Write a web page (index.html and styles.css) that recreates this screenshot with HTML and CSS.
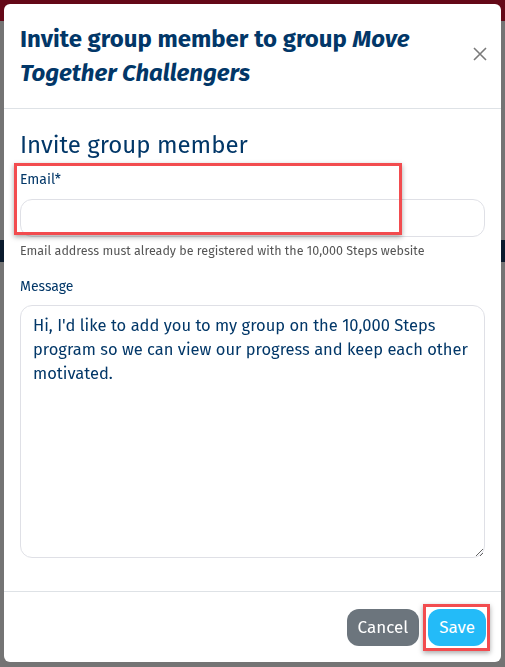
FILE: index.html
```html
<!DOCTYPE html>
<html lang="en">
<head>
    <meta charset="UTF-8">
    <meta name="viewport" content="width=device-width, initial-scale=1.0">
    <title>Invite group member</title>
    <link rel="stylesheet" href="styles.css">
</head>
<body>

    <!-- Page behind the dialog -->
    <div class="page">
        <div class="page-top"></div>
        <div class="page-band"></div>
    </div>
    <div class="backdrop"></div>

    <div class="modal">
        <div class="modal-header">
            <h1 class="modal-title">Invite group member to group <em>Move Together Challengers</em></h1>
            <button class="close" aria-label="Close">
                <svg width="14" height="14" viewBox="0 0 14 14"><path d="M1 1L13 13M13 1L1 13" stroke="#7a7a7a" stroke-width="1.6" fill="none"/></svg>
            </button>
        </div>

        <div class="modal-body">
            <h2 class="section-title">Invite group member</h2>

            <div class="field field-email">
                <label for="email">Email*</label>
                <input type="text" id="email">
                <div class="mark mark-email"></div>
            </div>
            <div class="help">Email address must already be registered with the 10,000 Steps website</div>

            <div class="field">
                <label for="message">Message</label>
                <textarea id="message">Hi, I'd like to add you to my group on the 10,000 Steps program so we can view our progress and keep each other motivated.</textarea>
            </div>
        </div>

        <div class="modal-footer">
            <button class="btn btn-cancel">Cancel</button>
            <div class="save-wrap">
                <button class="btn btn-save">Save</button>
                <div class="mark mark-save"></div>
            </div>
        </div>
    </div>

</body>
</html>
```

FILE: styles.css
```css
body {
    margin: 0;
    font-family: "Fira Sans", "Open Sans", sans-serif;
    background-color: #e9e9e9;
    height: 667px;
    overflow: hidden;
}
.page-top {
    height: 21px;
    background-color: #c8102e;
}
.page-band {
    margin-top: 219px;
    height: 22px;
    background-color: #14355a;
}
.backdrop {
    position: fixed;
    inset: 0;
    background-color: rgba(0, 0, 0, 0.5);
}
.modal {
    position: fixed;
    top: 4px;
    left: 4px;
    width: 497px;
    height: 658px;
    background-color: #fff;
    border-radius: 6px;
    display: flex;
    flex-direction: column;
    color: #023768;
}
.modal-header {
    display: flex;
    align-items: center;
    padding: 17px 16px 17px 16px;
    border-bottom: 1px solid #dee2e6;
    height: 70px;
}
.modal-title {
    margin: 0;
    flex: 1;
    font-size: 24px;
    line-height: 34px;
    font-weight: 700;
    padding-right: 30px;
}
.modal-title em {
    font-style: italic;
}
.close {
    background: none;
    border: none;
    padding: 0;
    margin-right: -2px;
    margin-bottom: 4px;
    width: 14px;
    height: 14px;
    cursor: pointer;
}
.modal-body {
    flex: 1;
    padding: 0 16px;
}
.section-title {
    margin: 20px 0 0 0;
    font-size: 24px;
    line-height: 32px;
    font-weight: 400;
}
.field {
    position: relative;
    display: flex;
    flex-direction: column;
}
.field-email {
    margin-top: 9px;
}
label {
    font-size: 14px;
    line-height: 20px;
}
input[type="text"], textarea {
    font-family: inherit;
    border: 1px solid #dfe0e6;
    border-radius: 12px;
    box-sizing: border-box;
    width: 100%;
    outline: none;
}
input[type="text"] {
    height: 38px;
    margin-top: 9px;
}
textarea {
    margin-top: 8px;
    height: 253px;
    padding: 8px 2px 8px 12px;
    font-size: 16.5px;
    line-height: 24px;
    color: #023768;
    resize: vertical;
}
.help {
    margin-top: 5px;
    font-size: 12.5px;
    line-height: 17px;
    color: #555;
    margin-bottom: 18px;
}
.mark {
    position: absolute;
    border: 3px solid #f24c4f;
    box-shadow: 0 2px 5px rgba(0, 0, 0, 0.35);
    box-sizing: border-box;
}
.mark-email {
    left: -6px;
    top: -7px;
    width: 388px;
    height: 72px;
}
.modal-footer {
    border-top: 1px solid #dee2e6;
    height: 70px;
    display: flex;
    justify-content: flex-end;
    align-items: center;
    gap: 9px;
    padding: 0 15px;
}
.btn {
    font-family: inherit;
    border: none;
    border-radius: 12px;
    color: #fff;
    font-size: 17px;
    height: 37px;
    padding: 0 11px;
    cursor: pointer;
}
.btn-cancel {
    background-color: #6c757d;
}
.save-wrap {
    position: relative;
}
.btn-save {
    background-color: #23bbf8;
    display: block;
}
.mark-save {
    left: -5px;
    top: -5px;
    right: -4px;
    bottom: -5px;
}
```
